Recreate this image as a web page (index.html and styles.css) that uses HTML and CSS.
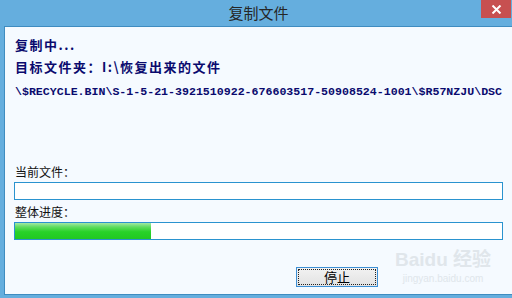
FILE: index.html
```html
<!DOCTYPE html>
<html lang="zh-CN">

<head>
    <meta charset="UTF-8">
    <meta name="viewport" content="width=device-width, initial-scale=1.0">
    <title>复制文件</title>
    <link rel="stylesheet" href="styles.css">
</head>

<body>

    <div class="window">
        <div class="titlebar">
            <span class="title">复制文件</span>
            <button class="close" title="关闭">
                <svg width="11" height="9" viewBox="0 0 11 9">
                    <path d="M1.5 0.5 L9.5 8.5 M9.5 0.5 L1.5 8.5" stroke="#fff" stroke-width="2" fill="none" />
                </svg>
            </button>
        </div>

        <div class="content">
            <div class="status">复制中...</div>
            <div class="target">目标文件夹：I:\恢复出来的文件</div>
            <div class="path">\$RECYCLE.BIN\S-1-5-21-3921510922-676603517-50908524-1001\$R57NZJU\DSC</div>

            <div class="fields">
                <div class="field">
                    <label>当前文件：</label>
                    <div class="box"></div>
                </div>
                <div class="field">
                    <label>整体进度：</label>
                    <div class="box">
                        <div class="fill" style="width: 28%;"></div>
                    </div>
                </div>
            </div>

            <div class="actions">
                <button class="stop"><span>停止</span></button>
            </div>

            <!-- watermark over the dialog -->
            <div class="mark">
                <div class="mark-logo">Bai<span class="paw">du</span> 经验</div>
                <div class="mark-url">jingyan.baidu.com</div>
            </div>
        </div>
    </div>

</body>

</html>
```

FILE: styles.css
```css
body {
    margin: 0;
    font-family: "Noto Sans CJK SC", "DejaVu Sans", sans-serif;
    background-color: #f5faff;
}

.window {
    width: 512px;
    height: 298px;
    box-sizing: border-box;
    display: flex;
    flex-direction: column;
    background-color: #65aede;
    padding: 0 0 3px 4px;
    overflow: hidden;
}

.titlebar {
    height: 26px;
    display: flex;
    align-items: center;
    justify-content: center;
    position: relative;
}

.title {
    font-size: 15px;
    color: #262626;
    margin-left: 1px;
    margin-top: -1px;
}

.close {
    position: absolute;
    top: 0;
    right: 1px;
    width: 30px;
    height: 18px;
    border: none;
    padding: 0;
    background-color: #c75050;
    display: flex;
    align-items: center;
    justify-content: center;
}

.content {
    flex: 1;
    position: relative;
    background-color: #f5faff;
    border: 1px solid #3f8cc0;
    border-right: none;
    padding: 8px 9px 0 9px;
}

.status,
.target {
    font-size: 13px;
    font-weight: bold;
    color: #0a0a6e;
    letter-spacing: 1.5px;
    padding-left: 1px;
    line-height: 20px;
}

.target {
    margin-top: 2px;
}

.path {
    font-family: "Liberation Mono", monospace;
    font-size: 11.6px;
    font-weight: bold;
    color: #0a0a6e;
    margin-top: 8px;
    line-height: 14px;
    white-space: nowrap;
    padding-left: 1px;
    margin-right: -9px;
}

.fields {
    display: flex;
    flex-direction: column;
    gap: 4px;
    margin-top: 65px;
}

.field {
    display: flex;
    flex-direction: column;
}

.field label {
    font-size: 12px;
    color: #111;
    line-height: 16px;
    height: 16px;
    padding-left: 1px;
    margin-bottom: 2px;
}

.box {
    height: 16px;
    background-color: #fff;
    border: 1px solid #2a93cf;
}

.fill {
    height: 100%;
    background: linear-gradient(#a4e8a4, #5fdc5f 25%, #28d228 55%, #22c822);
}

.actions {
    display: flex;
    justify-content: flex-start;
    padding-left: 282px;
    margin-top: 27px;
}

.stop {
    width: 82px;
    height: 20px;
    border: 1px solid #3d8fd4;
    background: linear-gradient(#f2f2f2, #e2e2e2);
    padding: 1px;
    font-family: "Noto Sans CJK SC", sans-serif;
    font-size: 13px;
    color: #000;
}

.stop span {
    display: flex;
    align-items: center;
    justify-content: center;
    height: 100%;
    box-sizing: border-box;
    border: 1px dotted #222;
    line-height: 14px;
}

.mark {
    position: absolute;
    left: 390px;
    top: 222px;
    color: #e0e6eb;
    font-family: "Liberation Sans", "Noto Sans CJK SC", sans-serif;
    text-align: center;
}

.mark-logo {
    font-size: 19px;
    font-weight: bold;
    line-height: 22px;
}

.mark-url {
    font-size: 10px;
    line-height: 12px;
    margin-top: 2px;
}
```
